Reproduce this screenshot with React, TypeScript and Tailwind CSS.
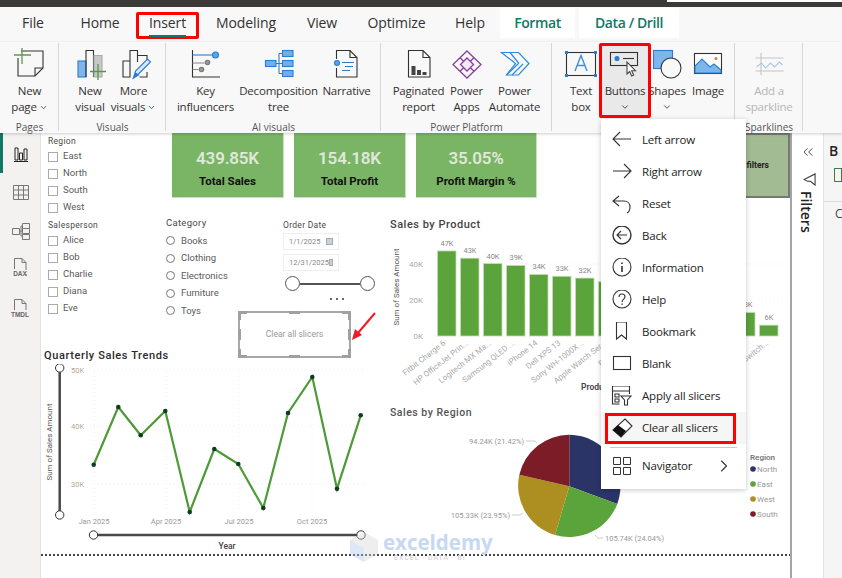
import type { ReactNode } from "react";
import { ChevronDown, ChevronRight, ChevronsLeft } from "lucide-react";

const ink = "#333231";

const tabs = [
  { label: "File", className: "w-[50px] ml-[8px]" },
  { label: "Home", className: "w-[68px] ml-[8px]" },
  { label: "Insert", className: "w-[63px] ml-[2px]", active: true },
  { label: "Modeling", className: "w-[82px] ml-[6px]" },
  { label: "View", className: "w-[70px]" },
  { label: "Optimize", className: "w-[79px]" },
  { label: "Help", className: "w-[60px] ml-[4px]" },
  { label: "Format", className: "w-[75px] bg-white text-[#117865] font-semibold tracking-[-0.4px]", context: true },
  { label: "Data / Drill", className: "w-[100px] ml-[4px] bg-white text-[#117865] font-semibold tracking-[-0.4px]", context: true },
];

function RibbonButton({
  width,
  view,
  lines,
  chevron,
  selected,
  disabled,
  children,
}: {
  width: string;
  view: string;
  lines: string[];
  chevron?: "inline" | "below";
  selected?: boolean;
  disabled?: boolean;
  children: ReactNode;
}) {
  return (
    <div className={"relative shrink-0 " + width + (selected ? " z-10" : "")}>
      {selected && (
        <span className="absolute left-0 top-[1px] h-[75px] w-full rounded-[2px] border-[3px] border-[#ff0000] bg-[#e9e9e9]" />
      )}
      <div className={"relative flex flex-col items-center pt-[5px] " + (disabled ? "text-[#b5b5b5]" : "text-[#333231]")}>
        <svg width="36" height="34" viewBox={view} fill="none" stroke={ink} strokeWidth="1.1">
          {children}
        </svg>
        <div className="mt-[2px] text-center text-[11.5px] leading-[16px] tracking-[-0.2px] whitespace-nowrap">
          {lines.map((line, i) => (
            <div key={line} className="flex items-center justify-center">
              {line}
              {chevron === "inline" && i === lines.length - 1 && <ChevronDown size={9} className="ml-[2px]" />}
            </div>
          ))}
          {chevron === "below" && (
            <div className="flex h-[16px] items-center justify-center">
              <ChevronDown size={10} />
            </div>
          )}
        </div>
      </div>
    </div>
  );
}

function RibbonGroup({ width, label, children }: { width: string; label: string; children: ReactNode }) {
  return (
    <div className={"relative flex h-full shrink-0 flex-col " + width}>
      <div className="flex h-[79px] justify-center">{children}</div>
      <div className="h-[12px] text-center text-[10px] leading-[12px] text-[#555]">{label}</div>
      <span className="absolute right-0 top-[1px] h-[88px] w-px bg-[#d6d6d6]" />
    </div>
  );
}

function Ribbon() {
  return (
    <div className="relative z-10 flex h-[91px] bg-[#f8f8f8] shadow-[0_1px_3px_rgba(0,0,0,0.2)]">
      <RibbonGroup width="w-[59px]" label="Pages">
        <RibbonButton width="w-[59px]" view="11 47 36 34" lines={["New", "page"]} chevron="inline">
          <path d="M20 51h22v17l-8 8H17V58" />
          <path d="M34 76v-8h8" />
          <path d="M13 55h17M21 48v16" stroke="#5b9a4a" strokeWidth="1.3" />
        </RibbonButton>
      </RibbonGroup>
      <RibbonGroup width="w-[107px]" label="Visuals">
        <RibbonButton width="w-[42px]" view="70 47 36 34" lines={["New", "visual"]}>
          <rect x="76" y="61" width="8" height="16" fill="#7cb6ea" stroke="#2b7cd3" />
          <path d="M84 77V50.5h7.5V77" />
          <path d="M92 55.5h8V77h-8z" fill="#c8c8c8" stroke="#aaa" />
          <path d="M88 71.5h16M96 64v16" stroke="#4f9a45" strokeWidth="1.3" />
        </RibbonButton>
        <RibbonButton width="w-[45px]" view="113.5 47 36 34" lines={["More", "visuals"]} chevron="inline">
          <path d="M120.5 77V61h7v16zM127.5 61V50.5h7.5V62M135 55.5h9.5V63M137 77h7.5v-5" />
          <path d="M131 78l2-7 12-12 3 3-12 12z" fill="#d5e8fa" stroke="#2b7cd3" />
          <path d="M131 78l2-5 3 2z" fill="#2b7cd3" stroke="#2b7cd3" />
        </RibbonButton>
      </RibbonGroup>
      <RibbonGroup width="w-[215px]" label="AI visuals">
        <RibbonButton width="w-[56px]" view="188 47 36 34" lines={["Key", "influencers"]}>
          <path d="M192.5 50v27H220" />
          <path d="M192.5 55H212" stroke="#2b7cd3" />
          <circle cx="215.5" cy="55" r="3" fill="#5aa6e8" stroke="#2b7cd3" />
          <path d="M192.5 63h12M192.5 69.5h6" stroke="#888" />
          <circle cx="207.5" cy="62.5" r="2.2" fill="#999" stroke="#777" />
          <circle cx="201.5" cy="69.5" r="2.2" fill="#999" stroke="#777" />
        </RibbonButton>
        <RibbonButton width="w-[90px]" view="261 47 36 34" lines={["Decomposition", "tree"]}>
          <g fill="#6fb0ea" stroke="#2b7cd3">
            <rect x="265.5" y="60.5" width="10.5" height="6" />
            <rect x="282.5" y="50.5" width="10.5" height="6" />
            <rect x="282.5" y="60.5" width="10.5" height="6" />
            <rect x="282.5" y="70.5" width="10.5" height="6" />
          </g>
          <path d="M276 63.5h6M279 53.5v20M279 53.5h3.5M279 73.5h3.5" stroke="#2b7cd3" />
        </RibbonButton>
        <RibbonButton width="w-[46px]" view="329 47 36 34" lines={["Narrative"]}>
          <path d="M336.5 59V50.5H350l7 7V77h-20.5v-9" />
          <path d="M350 50.5v7h7" />
          <circle cx="337" cy="63" r="2.5" fill="#5aa6e8" stroke="#2b7cd3" />
          <path d="M342 62.5h12M345 66.5h8M342 70.5h8" stroke="#2b7cd3" />
        </RibbonButton>
      </RibbonGroup>
      <RibbonGroup width="w-[171px]" label="Power Platform">
        <RibbonButton width="w-[54px]" view="401 47 36 34" lines={["Paginated", "report"]}>
          <path d="M408.5 77V50.5H423l7 7V77z" />
          <path d="M423 50.5v7h7" />
          <path d="M411.5 66h4v9h-4zM417 70h4v5h-4zM422.5 72h4v3h-4z" fill="#444" stroke="none" />
        </RibbonButton>
        <RibbonButton width="w-[42px]" view="449 47 36 34" lines={["Power", "Apps"]}>
          <g stroke="#8a3f9e" strokeWidth="1.3">
            <path d="M467 51l14 13.5L467 78l-14-13.5z" />
            <path d="M460 57.7l14 13.6M474 57.7L460 71.3" />
            <path d="M467 58l6.5 6.5-6.5 6.5-6.5-6.5z" fill="#f3e9f6" />
          </g>
        </RibbonButton>
        <RibbonButton width="w-[54px]" view="497 47 36 34" lines={["Power", "Automate"]}>
          <g stroke="#2b8ce0" strokeWidth="1.2">
            <path d="M501.5 52.5h17l10.5 11-10.5 11.5h-12l9-11.5z" />
            <path d="M506.5 75l12-11.5M512 75l11-11M510 52.5l9 11" />
          </g>
        </RibbonButton>
      </RibbonGroup>
      <RibbonGroup width="w-[183px]" label="">
        <div className="flex w-full pl-[11px]">
          <RibbonButton width="w-[36px]" view="563 47 36 34" lines={["Text", "box"]}>
            <rect x="566.5" y="52.5" width="29" height="23" />
            <g fill="#2b7cd3" stroke="none">
              <rect x="565" y="51" width="3" height="3" />
              <rect x="594" y="51" width="3" height="3" />
              <rect x="565" y="74" width="3" height="3" />
              <rect x="594" y="74" width="3" height="3" />
            </g>
            <path d="M575 71l6-15.5 6 15.5M577 65.5h8" stroke="#3d8fdc" strokeWidth="1.4" />
          </RibbonButton>
          <RibbonButton width="w-[52px]" view="606 47 36 34" lines={["Buttons"]} chevron="below" selected>
            <rect x="609.5" y="52.5" width="27" height="13" />
            <circle cx="616" cy="58.5" r="2" fill="#2b7cd3" stroke="#2b7cd3" />
            <path d="M622 58.5h11" />
            <path d="M626 62v12l2.700-2.500 2 4.500 2-1-2-4.300h3.800z" fill="#fff" stroke="#444" />
          </RibbonButton>
          <div className="-ml-[3px] flex">
            <RibbonButton width="w-[38px]" view="648 47 36 34" lines={["Shapes"]} chevron="below">
              <rect x="652.5" y="50.5" width="19" height="18" fill="#7cb6ea" stroke="#2b7cd3" />
              <circle cx="670" cy="68" r="10" fill="#f8f8f8" stroke="#333" />
            </RibbonButton>
            <RibbonButton width="w-[44px]" view="689 47 36 34" lines={["Image"]}>
              <rect x="693.5" y="53.5" width="27" height="20" fill="#fff" />
              <path d="M694 73V66l7-7 8 8 4-3 7 6v3z" fill="#7cb6ea" stroke="#2b7cd3" />
              <circle cx="715" cy="58.5" r="1.5" fill="#d9822b" stroke="none" />
            </RibbonButton>
          </div>
        </div>
      </RibbonGroup>
      <RibbonGroup width="w-[68px]" label="Sparklines">
        <RibbonButton width="w-[68px]" view="751.5 47 36 34" lines={["Add a", "sparkline"]} disabled>
          <path d="M761.5 53v22M756 58h28M756 71h28" stroke="#c4c4c4" />
          <path d="M757 67l5-4 4 5 5-5 4 4 5-5 3 3" stroke="#a9c9e8" />
        </RibbonButton>
      </RibbonGroup>
    </div>
  );
}

function SideIcons() {
  return (
    <div className="relative flex w-[41px] shrink-0 flex-col items-center border-r border-[#e3e3e3] bg-[#f3f2f1]">
      <span className="absolute left-0 top-0 h-[40px] w-[3px] bg-[#117865]" />
      <svg className="ml-[1px] mt-[13px]" width="16" height="16" viewBox="0 0 16 16" fill="none" stroke="#222" strokeWidth="1">
        <path d="M1 15.5h14M2 14V2h3v12zM6.5 14V7h3v7zM11 14V3h3v11z" />
      </svg>
      <svg className="ml-[1px] mt-[22px]" width="16" height="16" viewBox="0 0 16 16" fill="none" stroke="#777" strokeWidth="1">
        <path d="M.5 1.5h15v14H.5zM.5 6h15M.5 11h15M5.5 1.5v14M10.5 1.5v14" />
      </svg>
      <svg className="ml-[1px] mt-[22px]" width="18" height="18" viewBox="0 0 18 18" fill="none" stroke="#777" strokeWidth="1">
        <path d="M.5 6.5h7v6h-7zM10.5 1.5h7v5h-7zM10.5 6.5h7v5h-7zM10.5 12.5h7v5h-7zM7.5 9h3M9 4v10M9 4h1.5M9 14h1.5" />
      </svg>
      <div className="relative mt-[18px] flex h-[20px] w-[22px] justify-center">
        <svg width="16" height="20" viewBox="0 0 16 20" fill="none" stroke="#777" strokeWidth="1">
          <path d="M2.5 11V.5H10l4 4V12M10 .5v4h4M14 16v2" />
        </svg>
        <span className="absolute bottom-[1px] text-[6.5px] font-bold leading-none text-[#666] [font-family:'Liberation_Sans',sans-serif]">DAX</span>
      </div>
      <div className="relative mt-[21px] flex h-[20px] w-[24px] justify-center">
        <svg width="16" height="20" viewBox="0 0 16 20" fill="none" stroke="#777" strokeWidth="1">
          <path d="M2.5 11V.5H10l4 4V11M10 .5v4h4" />
        </svg>
        <span className="absolute bottom-[1px] text-[6.5px] font-bold leading-none text-[#666] [font-family:'Liberation_Sans',sans-serif]">TMDL</span>
      </div>
    </div>
  );
}

function CheckSlicer({ title, items, className }: { title: string; items: string[]; className: string }) {
  return (
    <div className={"absolute " + className}>
      <div className="h-[12px] text-[8.5px] leading-[12px] tracking-[0.3px] text-[#4a4a4a]">{title}</div>
      <div className="mt-[1px] flex flex-col">
        {items.map((item) => (
          <div key={item} className="flex h-[17px] items-center gap-[5px] text-[9.5px] text-[#5a5a5a]">
            <span className="h-[10px] w-[10px] border border-[#aaa] bg-white" />
            {item}
          </div>
        ))}
      </div>
    </div>
  );
}

function KpiCard({ value, label, className }: { value: string; label: string; className: string }) {
  return (
    <div className={"absolute top-0 flex h-[65px] flex-col items-center border-b border-r border-[#c9dfc0] bg-[#7ab565] pt-[13px] " + className}>
      <div className="text-[17px] font-semibold leading-[24px] tracking-[-0.2px] text-[#dfe8da]">{value}</div>
      <div className="mt-[3px] text-[11.5px] font-bold leading-[16px] text-[#111]">{label}</div>
    </div>
  );
}

const bars = [47, 43, 40, 39, 34, 33, 32, 30, 28, 26, 22, 18, 15, 13, 6];
const productNames = [
  "Fitbit Charge 6",
  "HP OfficeJet Prin...",
  "Logitech MX Ma...",
  "Samsung QLED ...",
  "iPhone 14",
  "Dell XPS 13",
  "Sony WH-1000X...",
  "Apple Watch Ser...",
  "Bose QC...",
];

function ProductChart() {
  return (
    <svg className="absolute left-[349px] top-[102px] h-[160px] w-[400px]" viewBox="390 235 400 160" fontFamily="Roboto, sans-serif">
      <text x="0" y="0" transform="translate(399 287) rotate(-90)" textAnchor="middle" fontSize="8" fill="#555">
        Sum of Sales Amount
      </text>
      {[
        ["40K", 264],
        ["20K", 300],
        ["0K", 336],
      ].map(([label, y]) => (
        <g key={label}>
          <text x="423" y={Number(y) + 3} textAnchor="end" fontSize="8" fill="#aaa">
            {label}
          </text>
          <path d={"M430 " + y + "H788"} stroke="#eee" strokeDasharray="1 3" />
        </g>
      ))}
      {bars.map((v, i) => {
        const x = 437.5 + i * 23;
        const h = v * 1.81;
        return (
          <g key={i}>
            <rect x={x} y={336 - h} width="18.5" height={h} fill="#5ba33b" stroke="#c5dcb9" strokeWidth="0.8" />
            <text x={x + 9.5} y={336 - h - 5} textAnchor="middle" fontSize="7.5" fill="#888">
              {v}K
            </text>
          </g>
        );
      })}
      {productNames.map((name, i) => (
        <text key={name} transform={"translate(" + (446 + i * 23) + " 344) rotate(-38)"} textAnchor="end" fontSize="8" fill="#aaa">
          {name}
        </text>
      ))}
      <text transform="translate(769 344) rotate(-38)" textAnchor="end" fontSize="8" fill="#aaa">
        Nintendo Switch...
      </text>
      <text x="581" y="390" fontSize="8.5" fontWeight="600" fill="#444">
        Product
      </text>
    </svg>
  );
}

const trend = [
  [93.7, 464.7],
  [118.3, 407],
  [140.7, 435.3],
  [165.3, 411],
  [189.7, 512],
  [214.3, 449],
  [238.3, 464],
  [263.3, 508],
  [288, 413],
  [312.3, 377],
  [337, 488.7],
  [360.7, 415.3],
];

function TrendChart() {
  const months = [
    ["Jan 2025", 94],
    ["Apr 2025", 166],
    ["Jul 2025", 239],
    ["Oct 2025", 312],
  ] as const;
  return (
    <svg className="absolute left-0 top-[231px] h-[214px] w-[349px]" viewBox="41 364 349 214" fontFamily="Roboto, sans-serif">
      {[
        ["50K", 370],
        ["40K", 426],
        ["30K", 484],
      ].map(([label, y]) => (
        <g key={label}>
          <text x="71" y={Number(y) + 3} fontSize="7.5" fill="#b5a98c">
            {label}
          </text>
          <path d={"M86 " + y + "H366"} stroke="#eaeaea" strokeDasharray="1 3" />
        </g>
      ))}
      {months.map(([label, x]) => (
        <g key={label}>
          <path d={"M" + x + " 372V512"} stroke="#f0f0f0" strokeDasharray="1 3" />
          <text x={x} y="524" textAnchor="middle" fontSize="7.5" fill="#999">
            {label}
          </text>
        </g>
      ))}
      <text transform="translate(52 442) rotate(-90)" textAnchor="middle" fontSize="8" fill="#555">
        Sum of Sales Amount
      </text>
      <path d="M59.7 372V511" stroke="#4a4848" strokeWidth="2.5" />
      <circle cx="59.7" cy="368" r="4.2" fill="#fff" stroke="#333" />
      <circle cx="59.7" cy="515" r="4.2" fill="#fff" stroke="#333" />
      <polyline points={trend.map((p) => p.join(",")).join(" ")} fill="none" stroke="#4f9a38" strokeWidth="2.2" />
      {trend.map(([x, y]) => (
        <circle key={x} cx={x} cy={y} r="2.3" fill="#0f3d24" />
      ))}
      <path d="M97 535H357" stroke="#4a4848" strokeWidth="2.5" />
      <circle cx="93.5" cy="535" r="4.2" fill="#fff" stroke="#333" />
      <circle cx="361" cy="535" r="4.2" fill="#fff" stroke="#333" />
      <text x="227" y="549" textAnchor="middle" fontSize="8.5" fontWeight="500" fill="#444">
        Year
      </text>
    </svg>
  );
}

function RegionPie() {
  const legend: [string, string, number][] = [
    ["North", "#2b3467", 469],
    ["East", "#5ba33b", 484],
    ["West", "#ad8e21", 499],
    ["South", "#7b1c26", 514],
  ];
  return (
    <svg className="absolute left-[380px] top-[290px] h-[130px] w-[369px]" viewBox="421 423 369 130" fontFamily="Roboto, sans-serif">
      <path d="M569.3 486.3V434.8A51.5 51.5 0 0 1 617.3 504z" fill="#2b3467" />
      <path d="M569.3 486.3L617.3 504A51.5 51.5 0 0 1 555 535z" fill="#5ba33b" />
      <path d="M569.3 486.3L555 535A51.5 51.5 0 0 1 519.3 474.7z" fill="#ad8e21" />
      <path d="M569.3 486.3L519.3 474.7A51.5 51.5 0 0 1 569.3 434.8z" fill="#7b1c26" />
      <g fill="none" stroke="#ccc">
        <path d="M526 441h9l2 2" />
        <path d="M512 515h8l3-2" />
        <path d="M595 535l3 3h5" />
      </g>
      <g fontSize="7.5" fill="#999">
        <text x="524" y="444" textAnchor="end">
          94.24K (21.42%)
        </text>
        <text x="510" y="518" textAnchor="end">
          105.33K (23.95%)
        </text>
        <text x="605" y="541">
          105.74K (24.04%)
        </text>
      </g>
      <text x="750" y="460" fontSize="8" fontWeight="600" fill="#777">
        Region
      </text>
      {legend.map(([label, color, y]) => (
        <g key={label}>
          <circle cx="753" cy={y} r="2.8" fill={color} />
          <text x="757" y={y + 3} fontSize="8" fill="#999">
            {label}
          </text>
        </g>
      ))}
    </svg>
  );
}

function Canvas() {
  return (
    <div className="relative w-[749px] shrink-0 overflow-hidden bg-white [font-family:Roboto,sans-serif]">
      <CheckSlicer title="Region" className="left-[7px] top-[2px]" items={["East", "North", "South", "West"]} />
      <CheckSlicer title="Salesperson" className="left-[7px] top-[86px]" items={["Alice", "Bob", "Charlie", "Diana", "Eve"]} />

      <KpiCard value="439.85K" label="Total Sales" className="left-[131px] w-[112px]" />
      <KpiCard value="154.18K" label="Total Profit" className="left-[253px] w-[112px]" />
      <KpiCard value="35.05%" label="Profit Margin %" className="left-[375px] w-[121px]" />
      <div className="absolute left-[560px] top-0 flex h-[65px] w-[189px] items-center justify-end border-2 border-[#777] bg-[#a2bb93] pr-[19px] text-[8.5px] font-bold text-[#222]">
        Apply all filters
      </div>

      <div className="absolute left-[125px] top-[84px]">
        <div className="h-[12px] text-[9.5px] leading-[12px] tracking-[0.3px] text-[#4a4a4a]">Category</div>
        <div className="mt-[3px] flex flex-col">
          {["Books", "Clothing", "Electronics", "Furniture", "Toys"].map((item) => (
            <div key={item} className="flex h-[17.5px] items-center gap-[6px] text-[9.5px] text-[#5a5a5a]">
              <span className="h-[9px] w-[9px] rounded-full border border-[#777] bg-white" />
              {item}
            </div>
          ))}
        </div>
      </div>

      <div className="absolute left-[242px] top-[86px] w-[92px]">
        <div className="h-[12px] text-[8.5px] leading-[12px] tracking-[0.3px] text-[#4a4a4a]">Order Date</div>
        {["1/1/2025", "12/31/2025"].map((d, i) => (
          <div key={d} className={"flex h-[17px] w-[56px] items-center justify-between border border-[#eee] px-[5px] text-[7.5px] text-[#888] " + (i === 0 ? "mt-[2px]" : "mt-[4px]")}>
            {d}
            <span className="h-[7px] w-[7px] border border-[#aaa] bg-[#c9d2dc]" />
          </div>
        ))}
        <div className="ml-[2px] mt-[5px] flex w-[90px] items-center">
          <span className="h-[15px] w-[15px] shrink-0 rounded-full border border-[#555] bg-white" />
          <span className="h-[2px] flex-1 bg-[#555]" />
          <span className="h-[15px] w-[15px] shrink-0 rounded-full border border-[#555] bg-white" />
        </div>
      </div>
      <div className="absolute left-[289px] top-[165px] flex gap-[4px]">
        <span className="h-[2px] w-[2px] bg-[#666]" />
        <span className="h-[2px] w-[2px] bg-[#666]" />
        <span className="h-[2px] w-[2px] bg-[#666]" />
      </div>

      <div className="absolute left-[197px] top-[178px] flex h-[47px] w-[113px] items-center justify-center text-[8.5px] text-[#999]">
        <svg className="absolute inset-0" width="113" height="47" fill="none">
          <rect x="1" y="1" width="111" height="45" stroke="#8c8c8c" strokeWidth="1.5" />
          <g stroke="#a0a0a0" strokeWidth="3">
            <path d="M1.5 9V1.5H9M104 1.5h7.5V9M1.5 38v7.5H9M104 45.5h7.5V38" />
            <path d="M51 1.5h11M51 45.5h11M1.5 18v11M111.5 18v11" />
          </g>
        </svg>
        <span className="relative">Clear all slicers</span>
      </div>
      <svg className="absolute left-[310px] top-[177px]" width="28" height="32" viewBox="351 310 28 32" fill="none">
        <path d="M375 313L358 333" stroke="#ee1c25" strokeWidth="2" />
        <path d="M352 340l3-11 7 6z" fill="#ee1c25" />
      </svg>

      <div className="absolute left-[3px] top-[216px] text-[11px] font-medium leading-[14px] tracking-[0.6px] text-[#2b2b2b]">Quarterly Sales Trends</div>
      <TrendChart />

      <div className="absolute left-[349px] top-[85px] text-[11px] font-medium leading-[14px] tracking-[0.5px] text-[#444]">Sales by Product</div>
      <ProductChart />

      <div className="absolute left-[349px] top-[273px] text-[10.5px] font-medium leading-[14px] tracking-[0.5px] text-[#555]">Sales by Region</div>
      <RegionPie />

      <div className="absolute left-0 top-[421px] h-[2px] w-full bg-[repeating-linear-gradient(90deg,#444_0_2px,transparent_2px_4px)]" />

      <svg className="absolute left-[309px] top-[399px] opacity-40" width="28" height="30" viewBox="0 0 28 30">
        <path d="M14 0l14 8v14l-14 8-14-8V8z" fill="#d5d5d5" />
        <path d="M0 8l14 8v14l-14-8z" fill="#a9c4ef" />
      </svg>
      <div className="pointer-events-none absolute left-[342px] top-[398px] text-[20.5px] font-bold leading-[23px] text-[#c7d8f3] [font-family:'Open_Sans',sans-serif]">
        exceldemy
      </div>
      <div className="absolute left-[353px] top-[421px] whitespace-nowrap text-[7px] leading-[9px] tracking-[1px] text-[#ccc]">EXCEL · DATA · BI</div>
    </div>
  );
}

function FiltersPane() {
  return (
    <div className="flex w-[33px] shrink-0 flex-col items-center border-l-2 border-[#a5a5a5] bg-white pt-[11px]">
      <ChevronsLeft size={16} strokeWidth={1.3} className="text-[#333]" />
      <svg className="ml-[3px] mt-[13px]" width="13" height="13" viewBox="0 0 14 14" fill="none" stroke="#333" strokeWidth="1.1">
        <path d="M13 1v12l-5-4H5L1 7z" />
      </svg>
      <div className="mr-[3px] mt-[5px] text-[14px] font-semibold leading-[16px] text-[#222] [font-family:'Open_Sans',sans-serif] [writing-mode:vertical-rl]">Filters</div>
    </div>
  );
}

function RightPane() {
  return (
    <div className="flex-1 overflow-hidden border-l border-[#e3e3e3] bg-[#f5f5f5] text-[#252423] [font-family:'Open_Sans',sans-serif]">
      <div className="pl-[5px] pt-[8px] text-[14px] font-semibold leading-[20px]">B</div>
      <div className="mt-[7px] flex h-[34px] border-b border-[#ddd] pl-[10px]">
        <span className="h-[14px] w-[14px] border border-[#3a7d44]" />
      </div>
      <div className="pl-[11px] pt-[3px] text-[12px] text-[#444]">C</div>
    </div>
  );
}

function ButtonsMenu() {
  const s = { fill: "none", stroke: "#333", strokeWidth: 1.1 };
  const items: { label: string; icon: ReactNode }[] = [
    { label: "Left arrow", icon: <path {...s} d="M2 9h18M9 2L2 9l7 7" /> },
    { label: "Right arrow", icon: <path {...s} d="M2 9h18M13 2l7 7-7 7" /> },
    { label: "Reset", icon: <path {...s} d="M8 2L2 7l6 5M2 7h11c4 0 6 3 6 6s-1 5-3 6" /> },
    { label: "Back", icon: <><circle {...s} strokeWidth={1.4} cx="11" cy="9" r="9" /><path {...s} d="M16 9H6M10 5L6 9l4 4" /></> },
    { label: "Information", icon: <><circle {...s} cx="11" cy="9" r="9" /><path {...s} strokeWidth={1.6} d="M11 8v6M11 4.5v1.5" /></> },
    { label: "Help", icon: <><circle {...s} cx="11" cy="9" r="9" /><path {...s} d="M8 7c0-2 1.5-3 3-3s3 1 3 3c0 2-3 2.5-3 5M11 13.5v1.5" /></> },
    { label: "Bookmark", icon: <path {...s} d="M5.5 0v17l5-4 5 4V0z" /> },
    { label: "Blank", icon: <rect {...s} x="2.5" y="2.5" width="17" height="13" /> },
    {
      label: "Apply all slicers",
      icon: (
        <>
          <path {...s} d="M1.5 0h17v5h-17zM1.5 5v13h7M18.5 5v3" />
          <path {...s} d="M4 8h4v3H4zM4 13h4v3H4z" />
          <path {...s} d="M10 10h10l-3.5 4v5h-3v-5z" />
        </>
      ),
    },
    {
      label: "Clear all slicers",
      icon: (
        <>
          <path d="M14 1l7 7-11 11-8-7z" fill="#fff" stroke="#333" strokeWidth="1.1" />
          <path d="M2 12l5-5 8 6-5 6z" fill="#111" />
        </>
      ),
    },
  ];
  return (
    <div className="absolute left-[601px] top-[119px] z-20 w-[145px] bg-white py-[5px] text-[11.5px] tracking-[-0.2px] text-[#252423] shadow-[0_1px_5px_rgba(0,0,0,0.22)] [font-family:'Open_Sans',sans-serif]">
      {items.map((item) => {
        const clear = item.label === "Clear all slicers";
        return (
          <div key={item.label} className={"relative flex h-[32px] items-center pl-[10px] " + (clear ? "bg-[#f6f6f6]" : "")}>
            {clear && <span className="absolute left-[4px] top-[1px] h-[31px] w-[131px] border-[3px] border-[#ff0000]" />}
            <svg className="relative shrink-0" width="22" height="20" viewBox="0 0 22 20">
              {item.icon}
            </svg>
            <span className="relative ml-[9px]">{item.label}</span>
          </div>
        );
      })}
      <div className="mx-[9px] mt-[3px] h-px bg-[#c8c8c8]" />
      <div className="flex h-[36px] items-center pl-[12px]">
        <svg className="shrink-0" width="18" height="18" viewBox="0 0 18 18" fill="none" stroke="#333" strokeWidth="1">
          <path d="M.5.5h7v7h-7zM10.5.5h7v7h-7zM.5 10.5h7v7h-7zM10.5 10.5h7v7h-7z" />
        </svg>
        <span className="ml-[11px] w-[72px]">Navigator</span>
        <ChevronRight size={20} strokeWidth={1.3} className="text-[#333]" />
      </div>
    </div>
  );
}

export default function App() {
  return (
    <div className="relative flex h-[578px] w-[842px] flex-col overflow-hidden bg-white [font-family:'Open_Sans',sans-serif]">
      <div className="relative h-[7px] shrink-0 bg-[#3b3a39]">
        <span className="absolute right-0 top-0 h-[2px] w-[175px] bg-white" />
      </div>
      <div className="flex h-[35px] shrink-0 bg-[#f8f8f8] text-[14px] tracking-[-0.1px] text-[#333231]">
        {tabs.map((tab) => (
          <div key={tab.label} className={"relative flex items-center justify-center " + tab.className + (tab.context ? " mb-[4px] mt-px" : "")}>
            {tab.active && <span className="absolute left-0 top-[5px] h-[27px] w-full rounded-[2px] border-[3px] border-[#ff0000]" />}
            {tab.active && <span className="absolute left-[13px] top-[28px] h-[2px] w-[37px] bg-[#117865]" />}
            <span className={"relative " + (tab.context ? "-mt-[2px]" : "-mt-[5px]")}>{tab.label}</span>
          </div>
        ))}
      </div>
      <Ribbon />
      <div className="flex min-h-0 flex-1">
        <SideIcons />
        <Canvas />
        <FiltersPane />
        <RightPane />
      </div>
      <ButtonsMenu />
    </div>
  );
}
